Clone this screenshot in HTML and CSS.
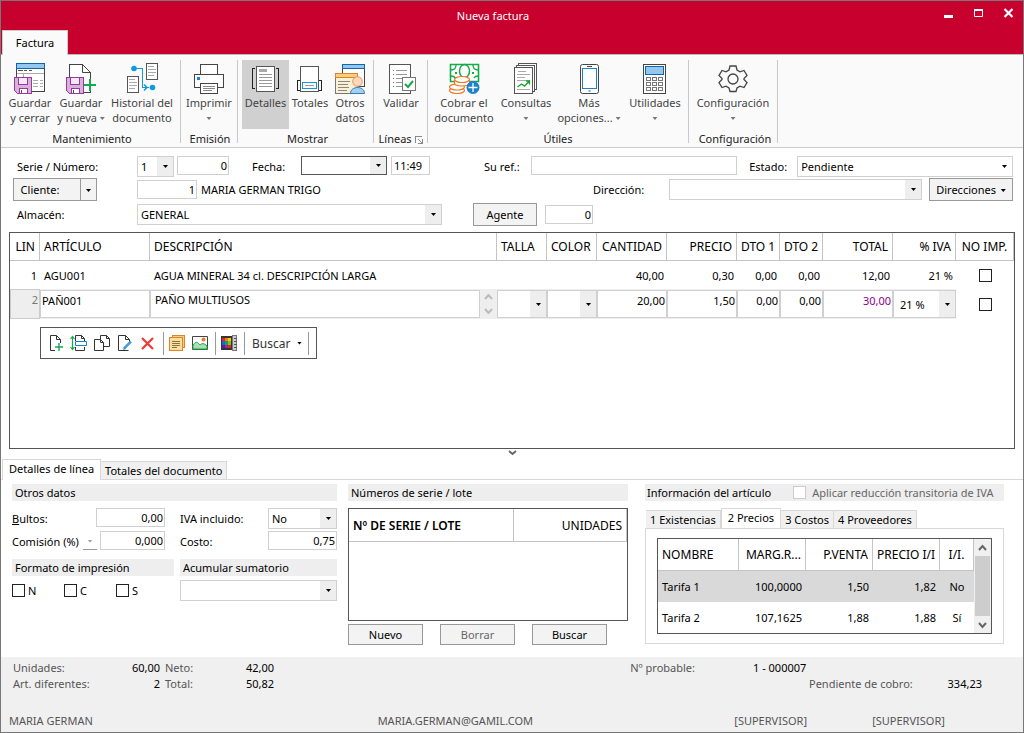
FILE: index.html
```html
<!DOCTYPE html>
<html lang="es">
<head>
<meta charset="utf-8">
<title>Nueva factura</title>
<link rel="stylesheet" href="styles.css">
</head>
<body>
<div class="window">
  <header class="titlebar">
    <span></span>
    <h1 class="title">Nueva factura</h1>
    <div class="win-controls">
      <button type="button" class="win-btn" aria-label="Minimizar"><svg width="12" height="12"><path d="M1 8h9v3H1z" fill="#fff"/></svg></button>
      <button type="button" class="win-btn" aria-label="Maximizar"><svg width="12" height="12"><path d="M1.500 2.500h8v7h-8zM1 3.500h9" fill="none" stroke="#fff"/><path d="M1 2h9v2H1z" fill="#fff"/></svg></button>
      <button type="button" class="win-btn" aria-label="Cerrar"><svg width="12" height="12"><path d="M1.500 2l8 8M9.500 2l-8 8" stroke="#fff" stroke-width="2.200"/></svg></button>
    </div>
  </header>
  <nav class="ribbon-tabs"><button type="button" class="ribbon-tab">Factura</button></nav>

  <div class="ribbon">
    <section class="group g-mant">
      <div class="tools">
        <button type="button" class="tool w52">
          <svg width="32" height="32" class="crisp" fill="none"><path d="M2.500 1.500h28v28h-28z" fill="#fff" stroke="#444"/><path d="M2.500 1.500h28v5h-28z" fill="#92c7ef" stroke="#1364a8"/><path d="M4 8.500h5M10 8.500h3M15 8.500h3" stroke="#555"/><path d="M3 11.500h27M9.500 11v5M19 18.500h5M26 18.500h3M19 21.500h5M26 21.500h3M19 24.500h5M26 24.500h3" stroke="#aaa"/><path d="M.5 15.500h17v16h-14l-3-3z" fill="#dcaedb" stroke="#933d9b"/><path d="M4.500 15.500h9v7h-9z" fill="#f5e8f5" stroke="#933d9b"/><path d="M5.500 26.500h8v5h-8z" fill="#fff" stroke="#933d9b"/><path d="M7.500 28v3" stroke="#555"/></svg>
          <span>Guardar<br>y cerrar</span></button>
        <button type="button" class="tool w50">
          <svg width="32" height="32" class="crisp" fill="none"><path d="M4.500 2.500h13l8 8v20h-21z" fill="#fff" stroke="#444"/><path d="M17.500 2.500v8h8" stroke="#444" shape-rendering="auto"/><path d="M1.500 15.500h17v16h-14l-3-3z" fill="#dcaedb" stroke="#933d9b"/><path d="M5.500 15.500h9v7h-9z" fill="#f5e8f5" stroke="#933d9b"/><path d="M6.500 26.500h8v5h-8z" fill="#fff" stroke="#933d9b"/><path d="M8.500 28v3" stroke="#555"/><path d="M19 17h13v12H19z" fill="#fafafa"/><path d="M19 23h12M25 17v12" stroke="#18a94c" stroke-width="2"/></svg>
          <span>Guardar<br>y nueva <i class="tri"></i></span></button>
        <button type="button" class="tool w72">
          <svg width="32" height="32" fill="none"><g class="crisp"><path d="M20.500 1.500h11v16h-11zM1.500 14.500h11v16h-11z" fill="#fff" stroke="#555"/><path d="M22 4.500h6M22 7.500h8M22 10.500h8M22 13.500h6M3 17.500h6M3 20.500h8M3 23.500h8M3 26.500h6" stroke="#aaa"/><path d="M8 6.500h8.500v19H23" stroke="#0c9be0"/></g><path d="M18 22.500l3 3-3 3" stroke="#0c9be0" stroke-width="1.500"/><circle cx="8" cy="6.500" r="2.800" fill="#0c9be0"/><circle cx="26.500" cy="25.500" r="2.800" fill="#0c9be0"/></svg>
          <span>Historial del<br>documento</span></button>
      </div>
      <h2 class="group-name">Mantenimiento</h2>
    </section>
    <section class="group g-emi">
      <div class="tools">
        <button type="button" class="tool w52">
          <svg width="32" height="32" class="crisp" fill="none"><path d="M7.500 2.500h17v10h-17z" fill="#fff" stroke="#444"/><path d="M1.500 12.500h29v13h-29z" fill="#fff" stroke="#444"/><path d="M4 15h3v3H4z" fill="#1c82cc"/><path d="M7.500 21.500h17v10h-17z" fill="#fff" stroke="#444"/><path d="M10 24.500h12M10 26.500h12M10 28.500h9" stroke="#888"/></svg>
          <span>Imprimir<br><i class="tri"></i></span></button>
      </div>
      <h2 class="group-name">Emisión</h2>
    </section>
    <section class="group g-mos">
      <div class="tools">
        <button type="button" class="tool w47 active" aria-pressed="true">
          <svg width="32" height="32" class="crisp" fill="none"><path d="M6.500 4.500h18v25h-18z" fill="#fff" stroke="#555"/><path d="M9 7h8v3H9z" fill="#aaa"/><path d="M9 12.500h13M9 15.500h13M9 18.500h13M9 21.500h13M9 24.500h13" stroke="#999"/><path d="M5 6.500H2.500v20H5M26 6.500h2.500v20H26" stroke="#222"/></svg>
          <span>Detalles</span></button>
        <button type="button" class="tool w42">
          <svg width="32" height="32" class="crisp" fill="none"><path d="M6.500 4.500h18v25h-18z" fill="#fff" stroke="#555"/><path d="M6 18.500H3.500v10H6M25 18.500h2.500v10H25" stroke="#222"/><path d="M8.500 20.500h14v6h-14z" stroke="#0c9be0"/><path d="M11 23.500h9" stroke="#999"/></svg>
          <span>Totales</span></button>
        <button type="button" class="tool w38">
          <svg width="32" height="32" fill="none"><g class="crisp"><path d="M8.500 2.500h22v22h-22z" fill="#fff" stroke="#444"/><path d="M8.500 2.500h22v4h-22z" fill="#92c7ef" stroke="#1364a8"/><path d="M1.500 11.500h22v20h-22z" fill="#fbf0d4" stroke="#777"/><path d="M1.500 11.500h22v4h-22z" fill="#f8cf7c" stroke="#e0812b"/><path d="M4 19.500h12M4 22.500h10M4 25.500h11M4 28.500h9" stroke="#888"/></g><path d="M16.500 31.500c0-8 14-8 14 0z" fill="#a5cff0" stroke="#2f7dbb"/><circle cx="23.500" cy="19.500" r="4.800" fill="#fbd9bd" stroke="#e79260"/></svg>
          <span>Otros<br>datos</span></button>
      </div>
      <h2 class="group-name">Mostrar</h2>
    </section>
    <section class="group g-lin">
      <div class="tools">
        <button type="button" class="tool w50">
          <svg width="32" height="32" fill="none"><g class="crisp"><path d="M4.500 2.500h21v29h-21z" fill="#fff" stroke="#555"/><path d="M11 8.500h11M11 12.500h11M11 16.500h8M11 20.500h6M11 24.500h6" stroke="#999"/><path d="M8 8.500h1M8 16.500h1M8 24.500h1" stroke="#18a94c"/><path d="M8 12.500h1M8 20.500h1" stroke="#d33"/><path d="M17.500 15.500h13v13h-13z" fill="#fff" stroke="#777"/></g><path d="M20 22l3 3 5-6" stroke="#18a94c" stroke-width="2"/></svg>
          <span>Validar</span></button>
      </div>
      <h2 class="group-name">Líneas <svg width="9" height="9" class="launcher crisp" fill="none" stroke="#888"><path d="M7 .5H.5V7"/><path d="M3 3l4 4M7.500 3v4.500H3" stroke="#888"/></svg></h2>
    </section>
    <section class="group g-uti">
      <div class="tools">
        <button type="button" class="tool w72">
          <svg width="32" height="32" fill="none"><path d="M2.500 2.500h28v17h-28z" fill="#fff" stroke="#18a94c" stroke-width="1.600"/><path d="M3 8c3 0 5-2 5-5M30 8c-3 0-5-2-5-5M3 14c2 0 4 1 5 3M30 14c-2 0-3 0-4 2" stroke="#18a94c" stroke-width="1.300"/><ellipse cx="16.500" cy="9" rx="5" ry="6.500" stroke="#18a94c" stroke-width="1.500"/><path d="M7 11h2M24 11h2" stroke="#18a94c" stroke-width="2"/><g fill="#fff" stroke="#ee7623" stroke-width="1.200"><ellipse cx="9" cy="28.500" rx="7.500" ry="3"/><ellipse cx="9" cy="25" rx="7.500" ry="3"/><path d="M6.500 18v3c0 4 15 4 15 0v-3"/><ellipse cx="14" cy="17.500" rx="7.500" ry="3"/></g><circle cx="25" cy="25.500" r="6.500" fill="#1c82cc"/><path d="M20.500 25.500h9M25 21v9" stroke="#fff" stroke-width="1.300"/></svg>
          <span>Cobrar el<br>documento</span></button>
        <button type="button" class="tool w52">
          <svg width="32" height="32" fill="none"><g class="crisp"><path d="M8.500 1.500h18v26h-18z" fill="#fff" stroke="#555"/><path d="M6.500 3.500h18v26h-18z" fill="#fff" stroke="#555"/><path d="M4.500 5.500h18v26h-18z" fill="#fff" stroke="#555"/><path d="M8 9.500h8M7 12.500h13M7 15.500h8M7 18.500h13M7 27.500h13" stroke="#aaa"/></g><path d="M7.500 25l4-3 3 2 5-5M16 19h3.500v3.500" stroke="#18a22c" stroke-width="1.400"/></svg>
          <span>Consultas<br><i class="tri"></i></span></button>
        <button type="button" class="tool w74">
          <svg width="32" height="32" fill="none"><rect x="7.500" y="2.500" width="18" height="29" rx="2" fill="#fff" stroke="#444"/><path d="M9.500 6.500h14v20h-14z" class="crisp" stroke="#1c82cc"/><path d="M14 4.500h5M15.500 29h2" stroke="#444"/></svg>
          <span>Más<br>opciones... <i class="tri"></i></span></button>
        <button type="button" class="tool w58">
          <svg width="32" height="32" class="crisp" fill="none"><path d="M4.500 2.500h22v29h-22z" fill="#fff" stroke="#444"/><path d="M6.500 4.500h18v8h-18z" fill="#92c7ef" stroke="#1364a8"/><path d="M7.500 15.500h4v3h-4zM13.500 15.500h4v3h-4zM19.500 15.500h4v3h-4zM7.500 20.500h4v3h-4zM13.500 20.500h4v3h-4zM19.500 20.500h4v3h-4zM7.500 25.500h4v3h-4zM13.500 25.500h4v3h-4zM19.500 25.500h4v3h-4z" stroke="#777"/></svg>
          <span>Utilidades<br><i class="tri"></i></span></button>
      </div>
      <h2 class="group-name">Útiles</h2>
    </section>
    <section class="group g-conf">
      <div class="tools">
        <button type="button" class="tool w80">
          <svg width="32" height="32" fill="none" stroke="#444" stroke-width="1.300"><path d="M13 4h6l1 4 3 1.800 4-1.300 3 5-3 3v1l3 3-3 5-4-1.300L20 26l-1 3.500h-6L12 26l-3-1.800-4 1.300-3-5 3-3v-1l-3-3 3-5 4 1.300L12 8z"/><circle cx="16" cy="17" r="5"/></svg>
          <span>Configuración<br><i class="tri"></i></span></button>
      </div>
      <h2 class="group-name">Configuración</h2>
    </section>
  </div>

  <form class="doc-form">
    <div class="row">
      <label class="lead" for="serie">Serie / Número:</label>
      <select id="serie" class="w-serie"><option>1</option></select>
      <input id="numero" class="num w-num" aria-label="Número" value="0">
      <label class="l-fecha" for="fecha">Fecha:</label>
      <select id="fecha" class="w-fecha dark"><option></option></select>
      <input class="w-hora" aria-label="Hora" value="11:49">
      <label class="l-ref" for="ref">Su ref.:</label>
      <input id="ref" class="w-ref">
      <label class="l-estado" for="estado">Estado:</label>
      <select id="estado" class="w-estado plain"><option>Pendiente</option></select>
    </div>
    <div class="row mid">
      <div class="split lead-btn"><button type="button" class="split-main">Cliente:</button><button type="button" class="split-arrow" aria-label="Opciones de cliente"><i class="tri black"></i></button></div>
      <input class="num w-cli" aria-label="Código de cliente" value="1">
      <span class="cli-name">MARIA GERMAN TRIGO</span>
      <label class="l-dir" for="dir">Dirección:</label>
      <select id="dir" class="w-dir"><option></option></select>
      <button type="button" class="btn b-dir">Direcciones <i class="tri black"></i></button>
    </div>
    <div class="row mid last">
      <label class="lead" for="almacen">Almacén:</label>
      <select id="almacen" class="w-alm"><option>GENERAL</option></select>
      <button type="button" class="btn b-agente">Agente</button>
      <input class="num w-agente" aria-label="Agente" value="0">
    </div>
  </form>

  <div class="grid-box">
    <table class="lines">
      <colgroup><col class="c30"><col class="c110"><col><col class="c50"><col class="c50"><col class="c70"><col class="c70"><col class="c43"><col class="c43"><col class="c70"><col class="c63"><col class="c58"></colgroup>
      <thead><tr><th class="r">LIN</th><th>ARTÍCULO</th><th>DESCRIPCIÓN</th><th>TALLA</th><th>COLOR</th><th class="r">CANTIDAD</th><th class="r">PRECIO</th><th class="r">DTO 1</th><th class="r">DTO 2</th><th class="r">TOTAL</th><th class="r">% IVA</th><th class="c">NO IMP.</th></tr></thead>
      <tbody>
        <tr class="view"><td class="r">1</td><td>AGU001</td><td>AGUA MINERAL 34 cl. DESCRIPCIÓN LARGA</td><td></td><td></td><td class="r">40,00</td><td class="r">0,30</td><td class="r">0,00</td><td class="r">0,00</td><td class="r">12,00</td><td class="r">21 %</td><td class="c"><input type="checkbox" aria-label="No imprimir línea 1"></td></tr>
        <tr class="edit"><td class="lin">2</td>
          <td><input class="cell" aria-label="Artículo" value="PAÑ001"></td>
          <td><div class="desc"><textarea class="cell" aria-label="Descripción">PAÑO MULTIUSOS</textarea><div class="spin"><svg width="9" height="6"><path d="M1 5l3.500-4L8 5" fill="none" stroke="#bbb" stroke-width="2"/></svg><svg width="9" height="6"><path d="M1 1l3.500 4L8 1" fill="none" stroke="#bbb" stroke-width="2"/></svg></div></div></td>
          <td><select class="cell" aria-label="Talla"><option></option></select></td>
          <td><select class="cell" aria-label="Color"><option></option></select></td>
          <td><input class="cell num" aria-label="Cantidad" value="20,00"></td>
          <td><input class="cell num" aria-label="Precio" value="1,50"></td>
          <td><input class="cell num" aria-label="Dto 1" value="0,00"></td>
          <td><input class="cell num" aria-label="Dto 2" value="0,00"></td>
          <td><input class="cell num total" aria-label="Total" value="30,00"></td>
          <td><select class="cell iva" aria-label="IVA"><option>21 %</option></select></td>
          <td class="c white"><input type="checkbox" aria-label="No imprimir línea 2"></td></tr>
      </tbody>
    </table>
    <div class="mini-bar">
      <button type="button" aria-label="Nueva línea"><svg width="18" height="18" fill="none"><path d="M8 16.500H3.500v-15h6l4 4V9M9.500 1.500v4h4" stroke="#333"/><path d="M8 13h8M12 9v8" stroke="#18a94c" stroke-width="1.400"/></svg></button>
      <button type="button" aria-label="Insertar línea"><svg width="18" height="18" fill="none"><path d="M5.500 7V1.500h6l3 3V7M11.500 1.500v3h3M5.500 13v3.500h9V13" stroke="#333"/><path d="M5.500 7.500h11v4h-11z" fill="#fff" stroke="#1c82cc"/><path d="M2.500 3v12M.5 5l2-2.500 2 2.500M.5 13l2 2.500 2-2.500" stroke="#18a94c" stroke-width="1.200"/></svg></button>
      <button type="button" aria-label="Duplicar"><svg width="18" height="18" fill="none" stroke="#333"><path d="M7.500 5V1.500h6l3 3v8h-6M13.500 1.500v3h3"/><path d="M1.500 5.500h6l3 3v8h-9zM7.500 5.500v3h3" fill="#fff"/></svg></button>
      <button type="button" aria-label="Modificar"><svg width="18" height="18" fill="none"><path d="M13.500 8V5.500l-4-4h-7v15h10M9.500 1.500v4h4" stroke="#333"/><path d="M8 14.500l7-7" stroke="#4a9bdc" stroke-width="2.500"/><path d="M7 16l1-2.500 1.500 1.500z" fill="#1c82cc"/></svg></button>
      <button type="button" aria-label="Eliminar"><svg width="18" height="18"><path d="M3 4l11 11M14 4L3 15" stroke="#ee3a35" stroke-width="2.200"/></svg></button>
      <i class="sep"></i>
      <button type="button" aria-label="Notas"><svg width="18" height="18" class="crisp"><path d="M4.500 1.500h12v12h-12z" fill="#f8cf7c" stroke="#e0812b"/><path d="M1.500 3.500h13v13h-13z" fill="#fbdf9f" stroke="#e0812b"/><path d="M4 7.500h8M4 9.500h8M4 11.500h8M4 13.500h5" stroke="#8a7340"/></svg></button>
      <button type="button" aria-label="Imagen"><svg width="18" height="18"><path d="M1.500 2.500h15v13h-15z" fill="#fff" stroke="#444"/><path d="M2 11c4-5 5-2 7 0 2-2 4-2 7 1v3H2z" fill="#a5dfb3" stroke="#18a94c"/><circle cx="12.500" cy="5.500" r="2" fill="#ee7b23"/></svg></button>
      <i class="sep"></i>
      <button type="button" aria-label="Tallas y colores"><svg width="18" height="18" class="crisp"><path d="M1 2h11v14H1z" fill="#333"/><path d="M2 4h3v3H2z" fill="#e22"/><path d="M5 4h3v3H5z" fill="#f77b18"/><path d="M8 4h3v3H8z" fill="#fc0"/><path d="M2 7h3v4H2z" fill="#1768d0"/><path d="M5 7h3v4H5z" fill="#12a845"/><path d="M8 7h3v4H8z" fill="#7bc51b"/><path d="M2 11h3v3H2z" fill="#52209c"/><path d="M5 11h3v3H5z" fill="#a023b0"/><path d="M8 11h3v3H8z" fill="#e22"/><path d="M12.500 1.500h4v15h-4z" fill="#ccc" stroke="#777"/><path d="M14 4.500h3M14 7.500h3M14 10.500h3M14 13.500h3" stroke="#555"/></svg></button>
      <i class="sep"></i>
      <button type="button" class="buscar">Buscar <i class="tri black"></i></button>
      <i class="sep"></i>
    </div>
  </div>
  <div class="splitter"><svg width="9" height="6"><path d="M1 1l3.500 3L8 1" fill="none" stroke="#666" stroke-width="2"/></svg></div>

  <div class="tabs main-tabs" role="tablist">
    <button type="button" role="tab" class="tab on" aria-selected="true">Detalles de línea</button>
    <button type="button" role="tab" class="tab">Totales del documento</button>
  </div>
  <div class="details">
    <section class="col1">
      <h3 class="sec wide">Otros datos</h3>
      <div class="fields">
        <div class="field"><label for="bultos"><u>B</u>ultos:</label><input id="bultos" class="num w-bul" value="0,00"></div>
        <div class="field"><label for="comision">Comisión (%)</label><button type="button" class="mini-drop" aria-label="Tipo de comisión"><i class="tri light"></i></button><input id="comision" class="num w-com" value="0,000"></div>
      </div>
      <div class="fields">
        <div class="field"><label for="iva">IVA incluido:</label><select id="iva" class="w-iva"><option>No</option></select></div>
        <div class="field"><label for="costo">Costo:</label><input id="costo" class="num w-iva" value="0,75"></div>
      </div>
      <div class="sub">
        <h3 class="sec">Formato de impresión</h3>
        <div class="checks"><label><input type="checkbox">N</label><label><input type="checkbox">C</label><label><input type="checkbox">S</label></div>
      </div>
      <div class="sub">
        <h3 class="sec">Acumular sumatorio</h3>
        <select class="w-acu" aria-label="Acumular sumatorio"><option></option></select>
      </div>
    </section>
    <section class="col2">
      <h3 class="sec">Números de serie / lote</h3>
      <div class="serial-box">
        <table class="serial"><colgroup><col><col class="c113"></colgroup><thead><tr><th class="bold">Nº DE SERIE / LOTE</th><th class="r">UNIDADES</th></tr></thead></table>
      </div>
      <div class="serial-btns"><button type="button" class="btn">Nuevo</button><button type="button" class="btn off">Borrar</button><button type="button" class="btn">Buscar</button></div>
    </section>
    <section class="col3">
      <div class="sec info"><h3>Información del artículo</h3><label><input type="checkbox" disabled>Aplicar reducción transitoria de IVA</label></div>
      <div class="tabs info-tabs" role="tablist">
        <button type="button" role="tab" class="tab">1 Existencias</button><button type="button" role="tab" class="tab on" aria-selected="true">2 Precios</button><button type="button" role="tab" class="tab">3 Costos</button><button type="button" role="tab" class="tab">4 Proveedores</button>
      </div>
      <div class="info-panel">
        <div class="price-box">
          <table class="prices">
            <colgroup><col><col class="c67"><col class="c67"><col class="c67"><col class="c34"></colgroup>
            <thead><tr><th>NOMBRE</th><th class="r">MARG.R...</th><th class="r">P.VENTA</th><th class="r">PRECIO I/I</th><th class="c">I/I.</th></tr></thead>
            <tbody><tr class="sel"><td>Tarifa 1</td><td class="r">100,0000</td><td class="r">1,50</td><td class="r">1,82</td><td class="c">No</td></tr>
            <tr><td>Tarifa 2</td><td class="r">107,1625</td><td class="r">1,88</td><td class="r">1,88</td><td class="c">Sí</td></tr></tbody>
          </table>
          <div class="scroll"><svg width="9" height="17"><path d="M1 11l3.500-4L8 11" fill="none" stroke="#666" stroke-width="2"/></svg><span class="thumb"></span><svg width="9" height="17"><path d="M1 7l3.500 4L8 7" fill="none" stroke="#666" stroke-width="2"/></svg></div>
        </div>
      </div>
    </section>
  </div>

  <footer class="status">
    <div class="totals">
      <span>Unidades:</span><b>60,00</b><span class="gap">Neto:</span><b>42,00</b><span class="prob">Nº probable:</span><b class="lft">1 - 000007</b><b></b>
      <span>Art. diferentes:</span><b>2</b><span class="gap">Total:</span><b>50,82</b><span></span><span class="pend">Pendiente de cobro:</span><b>334,23</b>
    </div>
    <div class="session"><span>MARIA GERMAN</span><span>MARIA.GERMAN@GAMIL.COM</span><span>[SUPERVISOR]</span><span>[SUPERVISOR]</span></div>
  </footer>
</div>
</body>
</html>
```
FILE: styles.css
```css
* { box-sizing: border-box; }
body { margin: 0; background: #fff; color: #000; font: 11px/15px "Noto Sans", "Open Sans", sans-serif; }
button, input, select, textarea { font: inherit; color: inherit; margin: 0; border-radius: 0; }
button { padding: 0; border: 0; background: none; }
h1, h2, h3 { margin: 0; font: inherit; }
.crisp { shape-rendering: crispEdges; }

.window { display: flex; flex-direction: column; min-height: 100vh; border: 1px solid #777; }
.titlebar { display: grid; grid-template-columns: 41px 1fr 72px; align-items: center; height: 29px; padding: 0 8px 0 1px; background: #c8002d; color: #fff; }
.title { text-align: center; }
.win-controls { display: flex; justify-content: flex-end; gap: 18px; padding-bottom: 6px; }
.win-btn { display: flex; width: 12px; }
.ribbon-tabs { display: flex; height: 25px; padding-left: 1px; background: #c8002d; border-bottom: 1px solid #bbb; }
.ribbon-tab { width: 66px; height: 25px; padding-bottom: 2px; background: #fafafa; border: 1px solid #ccc; border-bottom: 0; }

.tri { display: inline-block; width: 5px; height: 3px; background: #777; clip-path: polygon(0 0, 100% 0, 50% 100%); vertical-align: 2px; }
.tri.black { background: #000; }
.tri.light { background: #999; }

.ribbon { display: flex; height: 93px; padding-top: 5px; background: #fafafa; border-bottom: 1px solid #ccc; }
.group { display: flex; flex-direction: column; justify-content: space-between; height: 83px; border-right: 1px solid #c8c8c8; }
.g-mant { width: 180px; padding-left: 3px; }
.g-emi { width: 57px; padding-left: 2px; }
.g-mos { width: 136px; padding-left: 4px; }
.g-lin { width: 54px; padding-left: 2px; }
.g-uti { width: 261px; }
.g-conf { width: 89px; padding-left: 4px; }
.tools { display: flex; }
.tool { display: flex; flex-direction: column; align-items: center; height: 69px; padding-top: 2px; color: #444; white-space: nowrap; }
.tool svg { flex: none; margin-bottom: 1px; }
.tool.active { background: #d0d0d0; }
.w38 { width: 38px; } .w42 { width: 42px; } .w47 { width: 47px; } .w50 { width: 50px; } .w52 { width: 52px; }
.w58 { width: 58px; } .w72 { width: 72px; } .w74 { width: 74px; } .w80 { width: 80px; }
.group-name { margin-bottom: -3px; text-align: center; line-height: 14px; color: #222; }
.launcher { margin-left: 1px; vertical-align: -2px; }

input, select, textarea { height: 19px; padding: 0 3px; border: 1px solid #d0d0d0; background: #fff; min-width: 0; outline: 0; }
select { height: 21px; appearance: none; background: url("data:image/svg+xml,%3Csvg xmlns='http://www.w3.org/2000/svg' width='5' height='3'%3E%3Cpath d='M0 0h5L2.500 3z'/%3E%3C/svg%3E") right 5px center no-repeat, linear-gradient(#eee, #eee) right / 16px 100% no-repeat #fff; }
select.plain { background-size: auto, 0 0; }
input.num { text-align: right; padding: 0 1px; }
input[type="checkbox"] { appearance: none; width: 13px; height: 13px; padding: 0; border: 1px solid #222; flex: none; vertical-align: middle; }
td input[type="checkbox"] { display: block; margin: 0 auto; }
.btn { height: 21px; border: 1px solid #999; background: #f3f3f3; }

.doc-form { display: flex; flex-direction: column; padding: 8px 10px 6px 12px; }
.row { display: flex; height: 22px; align-items: flex-start; }
.row.mid { align-items: center; height: 23px; }
.row.last { margin-top: 2px; }
.row label { line-height: 22px; white-space: nowrap; }
.lead { width: 124px; padding-left: 4px; }
.w-serie { width: 37px; margin-right: 3px; }
.w-num { width: 52px; margin-right: 23px; }
.l-fecha { width: 49px; }
.w-fecha { width: 86px; height: 19px; margin-right: 4px; }
.dark { border-color: #555; }
.w-hora { width: 39px; padding: 0 2px; margin-right: 54px; }
.l-ref { width: 47px; }
.w-ref { flex: 206 1 0; margin-right: 12px; }
.l-estado { width: 48px; }
.w-estado { flex: 216 1 0; }
.split { display: flex; width: 84px; height: 23px; margin-right: 40px; border: 1px solid #999; background: #f3f3f3; }
.split-main { flex: 1; padding-right: 14px; }
.split-arrow { width: 16px; border-left: 1px solid #999; }
.w-cli { width: 60px; margin-right: 4px; }
.cli-name { width: 392px; }
.l-dir { width: 76px; }
.w-dir { flex: 1; margin-right: 7px; }
.b-dir { width: 84px; height: 23px; white-space: nowrap; }
.b-dir .tri { margin-left: 2px; }
.w-alm { width: 305px; margin-right: 31px; }
.b-agente { width: 64px; height: 23px; margin-right: 8px; }
.w-agente { width: 48px; }

.grid-box { flex: 1; margin: 0 8px; border: 1px solid #555; }
table { width: 100%; table-layout: fixed; border-collapse: separate; border-spacing: 0; }
th { font-size: 12px; font-weight: 400; text-align: left; padding: 0 4px; border-right: 1px solid #c4c4c4; border-bottom: 1px solid #c4c4c4; white-space: nowrap; }
td { padding: 0 4px; white-space: nowrap; }
.r { text-align: right; }
.c { text-align: center; }
.c30 { width: 30px; } .c34 { width: 34px; } .c43 { width: 43px; } .c50 { width: 50px; } .c58 { width: 58px; } .c63 { width: 63px; }
.c67 { width: 67px; } .c70 { width: 70px; } .c110 { width: 110px; } .c113 { width: 113px; }
.lines th { height: 28px; }
.lines .view td { height: 28px; }
.lines .view .r { padding-right: 3px; }
.edit td { height: 30px; padding: 1px 0; background: #eee; }
.edit .lin { border: 1px solid #ccc; text-align: right; color: #777; line-height: 17px; vertical-align: top; padding-right: 1px; }
.edit td.white { background: #fff; }
.cell { display: block; width: 100%; height: 28px; }
input.cell, textarea.cell { padding: 0 1px 8px; }
textarea.cell { padding-left: 4px; resize: none; overflow: hidden; line-height: 18px; }
.iva { padding-left: 6px; }
.total { color: #8b008b; }
.desc { display: flex; }
.spin { display: flex; flex-direction: column; justify-content: space-around; align-items: center; width: 17px; flex: none; }
.mini-bar { display: inline-flex; align-items: center; height: 32px; margin: 8px 0 0 30px; padding: 0 7px 0 6px; border: 1px solid #555; vertical-align: top; }
.mini-bar button { display: flex; width: 23px; }
.sep { width: 1px; height: 23px; margin: 0 4px 0 1px; background: #999; }
.sep:last-child { margin-right: 0; }
.mini-bar .buscar { align-items: center; justify-content: space-between; width: 50px; font-size: 12px; margin: 0 5px 0 3px; color: #333; }

.splitter { display: flex; justify-content: center; height: 10px; padding-top: 1px; }
.tabs { display: flex; align-items: flex-end; }
.tab { height: 18px; padding: 0 4px; background: #f0f0f0; border: 1px solid #d8d8d8; border-bottom: 0; border-left-width: 0; white-space: nowrap; }
.tab.on { background: #fff; border-left-width: 1px; height: 20px; padding: 0 6px 2px; }
.main-tabs { height: 21px; padding-left: 1px; border-bottom: 1px solid #d8d8d8; }
.main-tabs .on { height: 21px; margin-bottom: -1px; padding: 0 6px 3px; }

.details { display: grid; grid-template-columns: 325fr 280fr 365fr; column-gap: 11px; padding: 4px 19px 12px 11px; }
.sec { height: 17px; padding: 0 3px; background: #eee; line-height: 17px; white-space: nowrap; }
.col1 { display: grid; grid-template-columns: 162fr 157fr; column-gap: 6px; align-content: start; row-gap: 7px; }
.wide { grid-column: 1 / -1; }
.fields { display: flex; flex-direction: column; gap: 2px; }
.fields:nth-child(2) { padding-right: 9px; }
.field { display: flex; height: 21px; }
.field label { flex: 1; line-height: 21px; white-space: nowrap; }
.w-bul { width: 69px; }
.w-com { width: 65px; }
.w-iva { width: 69px; }
.mini-drop { width: 14px; height: 19px; margin-right: 3px; border-bottom: 1px solid #999; }
.checks { display: flex; padding-top: 8px; }
.checks label { display: flex; align-items: center; gap: 3px; width: 52px; height: 13px; }
.w-acu { display: block; width: 100%; margin-top: 4px; }
.serial-box { height: 113px; margin-top: 7px; border: 1px solid #555; }
.serial th { height: 33px; }
.serial .bold { font-weight: 600; }
.serial-btns { display: flex; gap: 17px; margin-top: 3px; }
.serial-btns .btn { width: 75px; }
.off { color: #666; }
.col3 { padding-left: 6px; }
.info { display: flex; gap: 22px; padding: 0 2px; }
.info label { display: flex; align-items: center; gap: 6px; color: #666; }
.info input { border-color: #ccc; }
.info-tabs { height: 27px; padding-left: 1px; }
.info-panel { padding: 9px 11px; border: 1px solid #d8d8d8; }
.price-box { display: flex; border: 1px solid #555; }
.prices th { height: 32px; }
.prices td { height: 31px; }
.sel td { background: #d9d9d9; }
.scroll { display: flex; flex-direction: column; align-items: center; flex: none; width: 17px; background: #f0f0f0; }
.thumb { flex: 1; width: 15px; background: #cdcdcd; }

.status { background: #f0f0f0; padding: 3px 8px 4px; color: #555; }
.totals { display: grid; grid-template-columns: 84px 63px 50px 64px 1fr 56px 173px; line-height: 16px; padding: 0 33px 0 4px; white-space: nowrap; }
.totals b { font-weight: 400; color: #000; text-align: right; }
.gap { padding-left: 5px; }
.prob { justify-self: end; padding-right: 58px; }
.totals .lft { text-align: left; }
.pend { padding-left: 56px; }
.session { display: grid; grid-template-columns: 369fr 357fr 138fr 143fr; margin-top: 21px; }
```
